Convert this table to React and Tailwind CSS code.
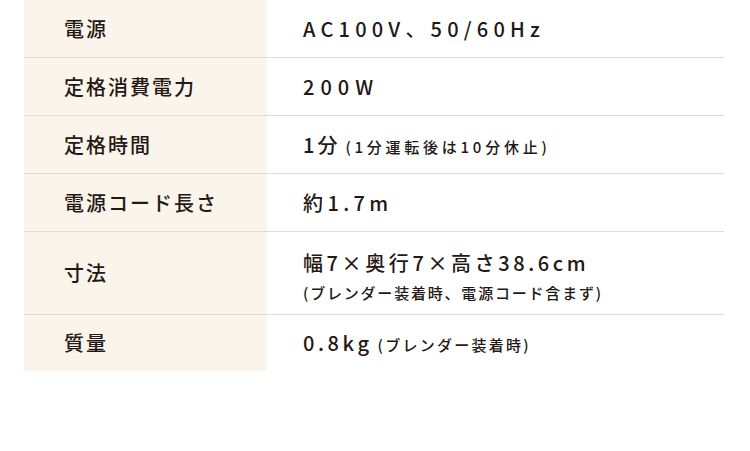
export default function App() {
  const font = { fontFamily: '"Noto Sans CJK JP", "Noto Sans", sans-serif' };
  const rows = [
    { label: "電源", h: "h-[58px]", value: <span className="tracking-[0.26em]">AC100V、50/60Hz</span> },
    { label: "定格消費電力", h: "h-[58px]", value: <span className="tracking-[0.3em]">200W</span> },
    {
      label: "定格時間",
      h: "h-[58px]",
      value: (
        <span>
          <span className="tracking-[0.15em]">1分</span>
          <span className="text-[15px] tracking-[0.25em] ml-[5px]">(1分運転後は10分休止)</span>
        </span>
      ),
    },
    { label: "電源コード長さ", h: "h-[58px]", value: <span className="tracking-[0.22em]">約1.7m</span> },
    {
      label: "寸法",
      h: "h-[83px]",
      value: (
        <div className="flex flex-col pt-[6px]">
          <span className="tracking-[0.18em] leading-[28px]">幅7×奥行7×高さ38.6cm</span>
          <span className="text-[15px] tracking-[0.12em] leading-[22px] mt-[5px]">(ブレンダー装着時、電源コード含まず)</span>
        </div>
      ),
    },
    {
      label: "質量",
      h: "h-[56px]",
      last: true,
      value: (
        <span>
          <span className="tracking-[0.18em]">0.8kg</span>
          <span className="text-[15px] tracking-[0.15em] ml-[5px]">(ブレンダー装着時)</span>
        </span>
      ),
    },
  ];
  return (
    <div className="w-[750px] h-[451px] bg-white" style={font}>
      <div className="ml-[24px] w-[700px] flex flex-col">
        {rows.map((r, i) => (
          <div
            key={i}
            className={`flex ${r.h} ${r.last ? "" : "border-b border-[#e1dbd1]"}`}
          >
            <div className="w-[243px] bg-[#faf4ea] flex items-center pl-[40px] text-[20px] font-medium tracking-[0.1em] text-[#231815]">
              {r.label}
            </div>
            <div className="flex-1 flex items-center pl-[36px] text-[20px] font-medium text-[#231815]">
              {r.value}
            </div>
          </div>
        ))}
      </div>
    </div>
  );
}
